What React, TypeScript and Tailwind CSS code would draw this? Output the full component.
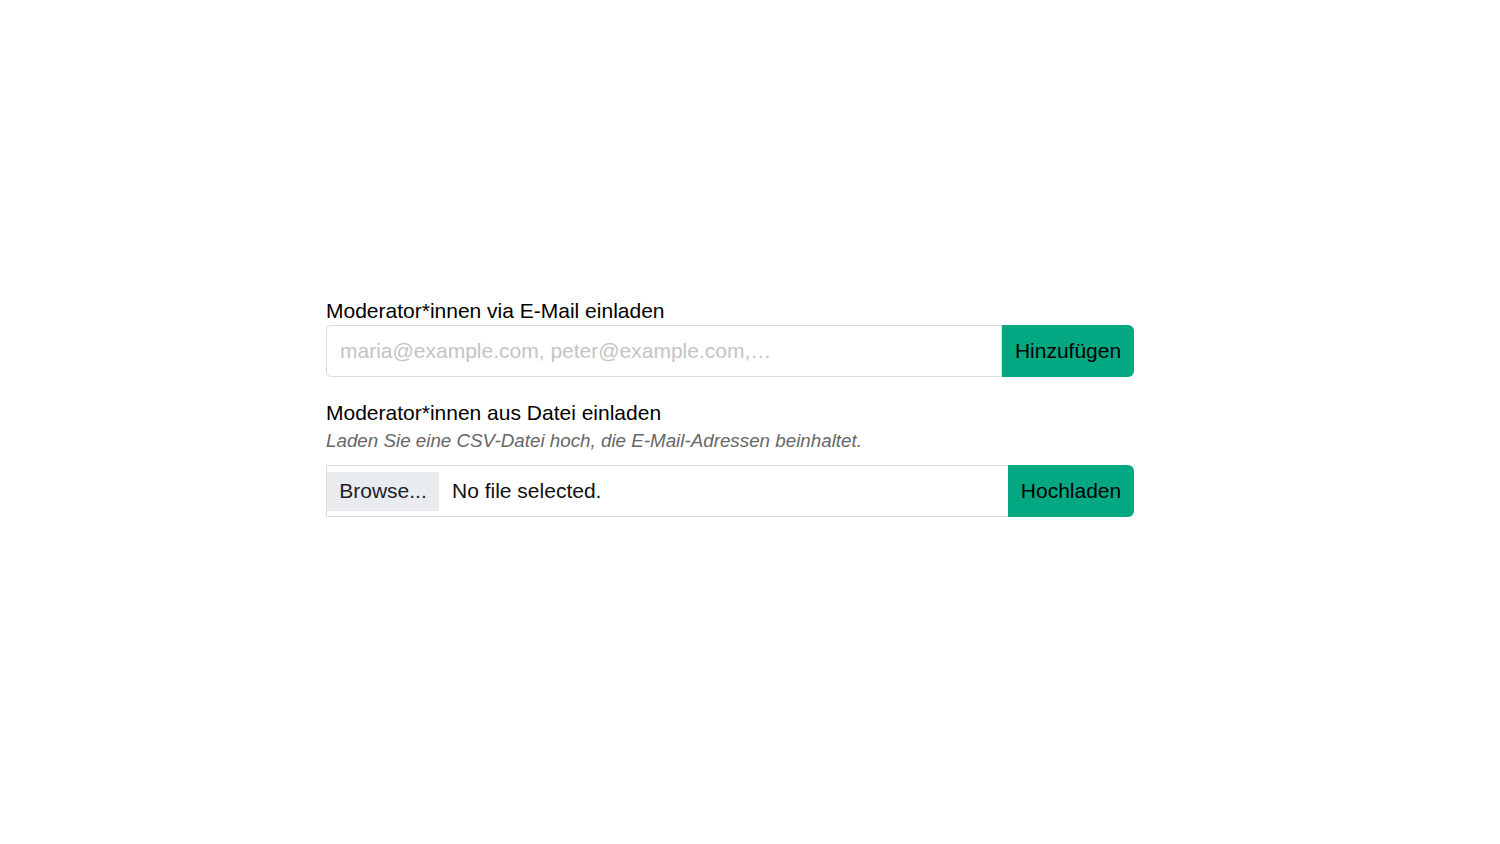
export default function App() {
  return (
    <div className="min-h-screen bg-white font-['Liberation_Sans',Arial,sans-serif] text-black">
      <div className="w-[808px] ml-[326px] pt-[297px]">
        {/* E-Mail */}
        <label className="block text-[21px] leading-[27px] mb-[1px]">Moderator*innen via E-Mail einladen</label>
        <div className="flex h-[52px]">
          <input
            className="flex-1 min-w-0 border border-[#dcdcdc] rounded-l-[5px] px-[13px] text-[21px] outline-none placeholder:text-[#c4c4c4]"
            placeholder="maria@example.com, peter@example.com,…"
          />
          <button className="w-[132px] bg-[#03a882] rounded-r-[6px] text-[21px] text-black">Hinzufügen</button>
        </div>

        {/* Datei */}
        <label className="block mt-[22px] text-[21px] leading-[27px]">Moderator*innen aus Datei einladen</label>
        <p className="italic text-[18.8px] leading-[24px] text-[#666666] mt-[3px]">
          Laden Sie eine CSV-Datei hoch, die E-Mail-Adressen beinhaltet.
        </p>
        <div className="flex h-[52px] mt-[12px]">
          <div className="flex-1 flex items-center border border-[#dcdcdc] border-r-0">
            <div className="h-[39px] w-[112px] bg-[#e9ecef] flex items-center justify-center text-[21px] text-[#222]">
              Browse...
            </div>
            <span className="ml-[13px] text-[21px] text-[#111]">No file selected.</span>
          </div>
          <button className="w-[126px] bg-[#03a882] rounded-r-[6px] text-[21px] text-black">Hochladen</button>
        </div>
      </div>
    </div>
  )
}
